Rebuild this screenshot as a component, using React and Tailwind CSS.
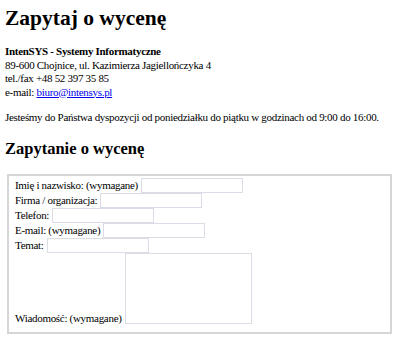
const FIELDS = [
  { label: "Imię i nazwisko: (wymagane)" },
  { label: "Firma / organizacja:" },
  { label: "Telefon:" },
  { label: "E-mail: (wymagane)" },
  { label: "Temat:" },
];

function Field({ label }) {
  return (
    <div className="flex items-center gap-[3px] h-[15px] leading-[15px]">
      <span>{label}</span>
      <input
        type="text"
        className="w-[102px] h-[15px] border border-[#dcdce6] bg-white outline-none"
      />
    </div>
  );
}

export default function App() {
  return (
    <div className="w-[400px] h-[339px] overflow-hidden bg-white text-black pl-[5px] pr-[8px] font-['Liberation_Serif',serif] text-[11px] tracking-[-0.3px]">
      <h1 className="mt-[5px] text-[21.5px] leading-[27px] font-bold tracking-normal">
        Zapytaj o wycenę
      </h1>

      <div className="mt-[13px] leading-[13.5px]">
        <div className="font-bold">IntenSYS - Systemy Informatyczne</div>
        <div>89-600 Chojnice, ul. Kazimierza Jagiellończyka 4</div>
        <div>tel./fax +48 52 397 35 85</div>
        <div>
          e-mail:{" "}
          <a href="#" className="text-[#0000ee] underline">
            biuro@intensys.pl
          </a>
        </div>
      </div>

      <p className="mt-[12px] leading-[13.5px]">
        Jesteśmy do Państwa dyspozycji od poniedziałku do piątku w godzinach od
        9:00 do 16:00.
      </p>

      <h2 className="mt-[13px] text-[16.5px] leading-[21px] font-bold tracking-normal">
        Zapytanie o wycenę
      </h2>

      <form className="mt-[15px] ml-[2px] border-2 border-[#d6d6d6] pt-[2px] pb-[8px] pl-[6px]">
        {FIELDS.map((f) => (
          <Field key={f.label} label={f.label} />
        ))}
        <div className="flex items-end gap-[3px]">
          <span className="leading-[13px] mb-[-1px]">Wiadomość: (wymagane)</span>
          <textarea className="w-[127px] h-[71px] border border-[#dcdce6] bg-white resize-none outline-none" />
        </div>
      </form>
    </div>
  );
}
